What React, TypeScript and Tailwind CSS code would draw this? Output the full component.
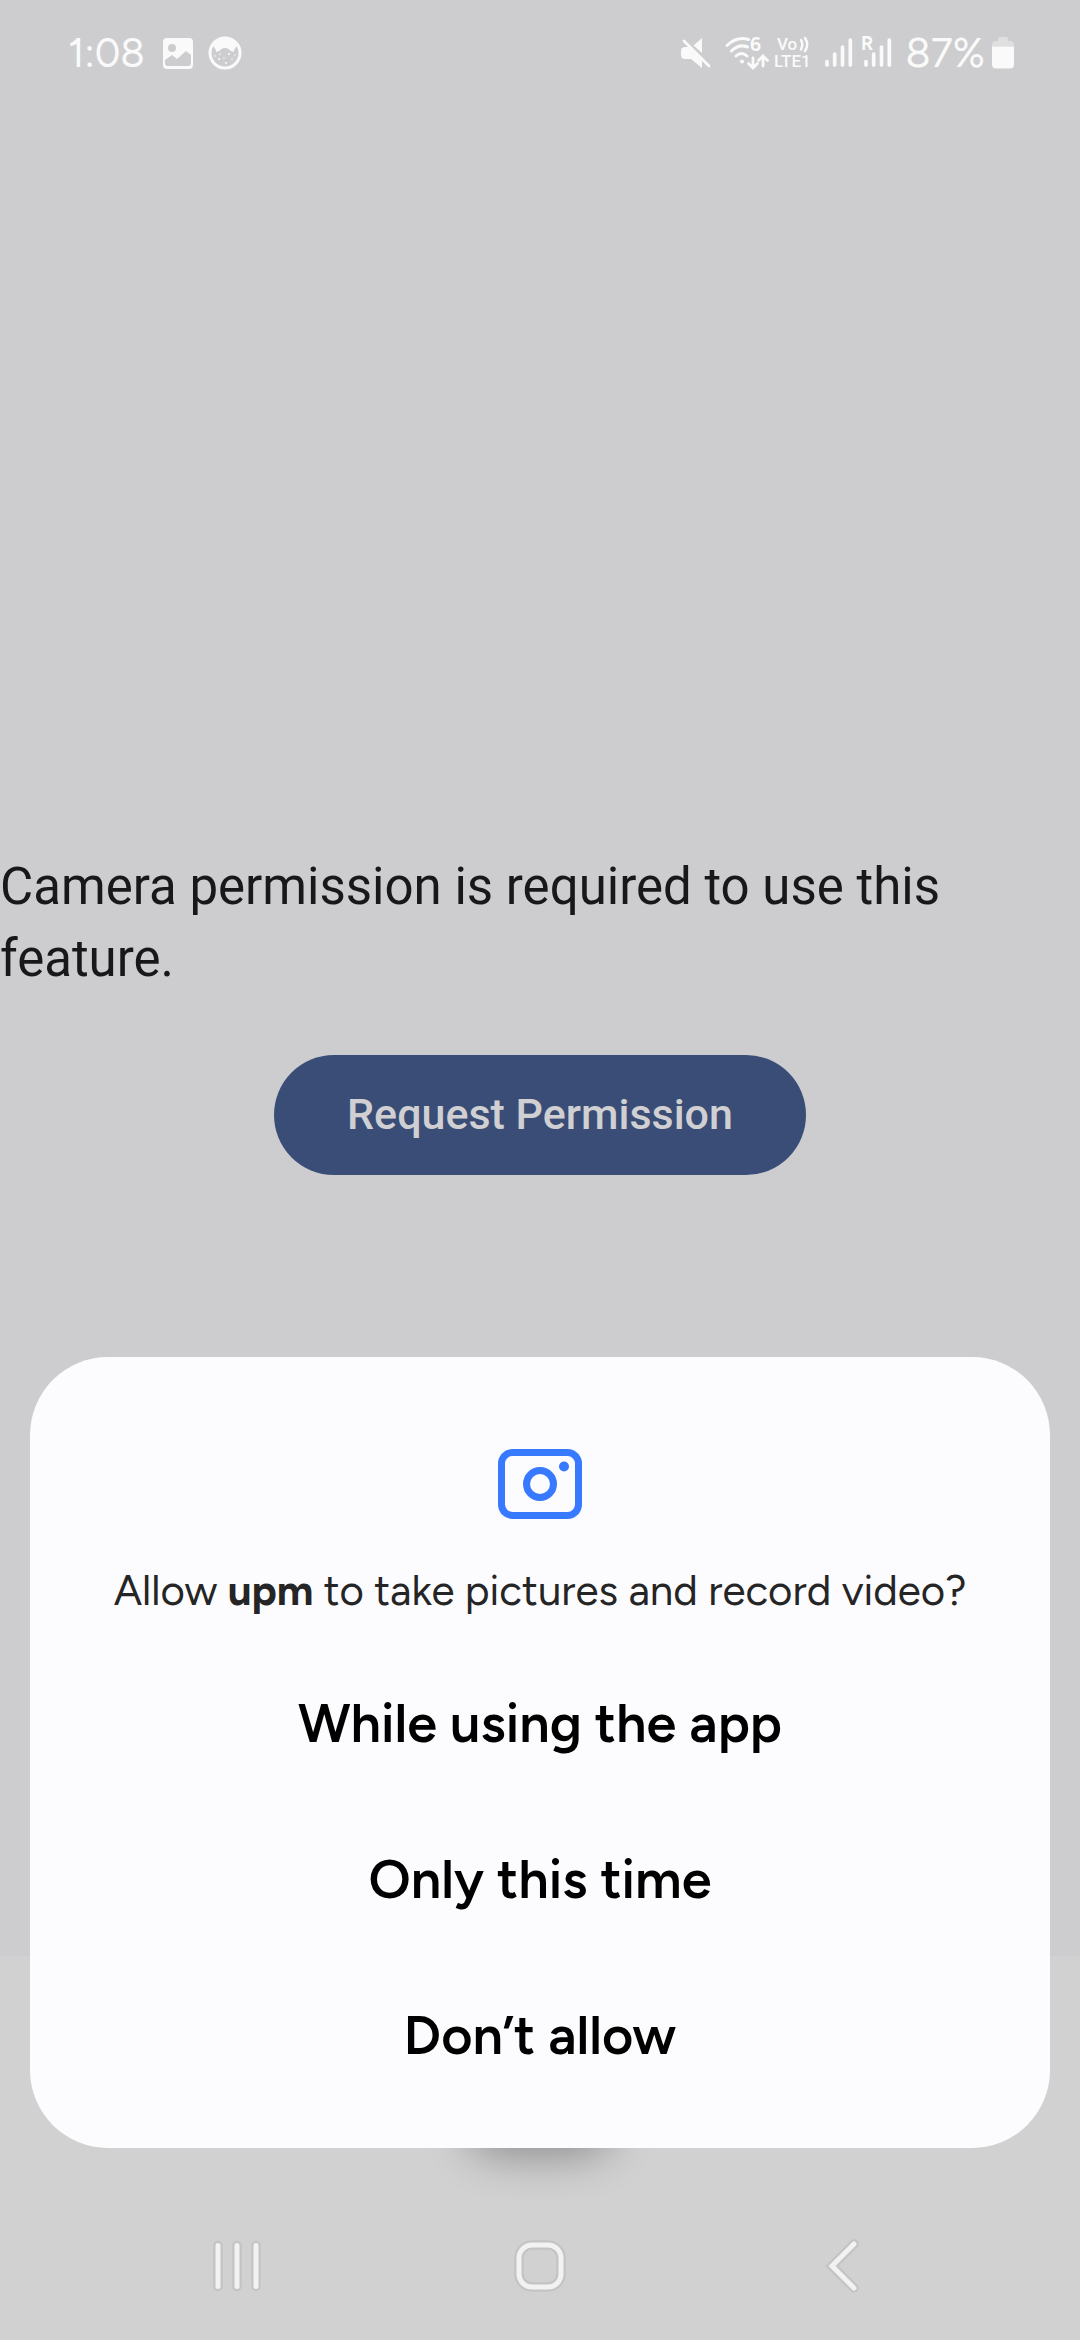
import React from "react";

function MuteIcon() {
  return (
    <svg className="h-[32px] w-[30px]" viewBox="0 0 30 32" fill="currentColor" aria-label="Muted">
      <path d="M12.500 8.500L21 1V16Z" />
      <path d="M4 10H7.500L21 23.500V31L10 22H4Q0 22 0 18V14Q0 10 4 10Z" />
      <path d="M3 4L28 29" stroke="currentColor" strokeWidth="2.800" strokeLinecap="round" />
    </svg>
  );
}

function WifiIcon() {
  return (
    <svg className="ml-[14px] h-[40px] w-[44px]" viewBox="0 -4 44 40" aria-label="Wi-Fi 6">
      <g fill="none" stroke="currentColor" strokeWidth="3" strokeLinecap="round">
        <path d="M2 8.500Q12 -1 23.500 2.500" />
        <path d="M6.500 14Q14 6.500 22.500 10" />
        <path d="M11 19Q16.500 14 22 19" />
        <path d="M28 21V30M23.500 26.500L28 31L32.500 26.500" strokeWidth="2.800" />
        <path d="M38 29V20M33.500 23.500L38 19L42.500 23.500" strokeWidth="2.800" />
      </g>
      <circle cx="17" cy="24.500" r="2" fill="currentColor" />
      <text x="25" y="14" fill="currentColor" className="font-['Figtree','Inter',sans-serif] text-[19px] font-bold">
        6
      </text>
    </svg>
  );
}

function VolteIcon() {
  return (
    <svg className="ml-[5px] h-[44px] w-[40px]" viewBox="0 -6 40 44" aria-label="VoLTE 1">
      <g fill="currentColor" className="font-['Roboto',sans-serif] text-[17px] font-medium">
        <text x="3" y="13">
          Vo
        </text>
        <text x="0" y="30">
          LTE1
        </text>
      </g>
      <g fill="none" stroke="currentColor" strokeWidth="2.500" strokeLinecap="round">
        <path d="M27 3Q29.500 7.500 27 12.500" />
        <path d="M31 1Q35.500 7.500 31 14" />
      </g>
    </svg>
  );
}

function SignalIcon({ roaming = false }: { roaming?: boolean }) {
  return (
    <svg className="ml-[8px] h-[40px] w-[31px]" viewBox="-1 -4 31 40" aria-label="Signal">
      <g stroke="currentColor" strokeWidth="3.700" strokeLinecap="round">
        <path d="M4 24.500V28" />
        <path d="M11.700 17V28" />
        <path d="M19.500 10V28" />
        <path d="M27.300 3V28" />
      </g>
      {roaming && (
        <text x="-1" y="13" fill="currentColor" className="font-['Figtree','Inter',sans-serif] text-[19px] font-bold">
          R
        </text>
      )}
    </svg>
  );
}

function BatteryIcon() {
  return (
    <svg className="h-[32px] w-[22px]" viewBox="0 0 22 32" fill="currentColor" aria-label="Battery">
      <path opacity=".4" d="M6 2Q6 0 8 0H14Q16 0 16 2V4H18Q22 4 22 8V9.500H0V8Q0 4 4 4H6Z" />
      <path d="M0 9.500H22V27.500Q22 31.500 18 31.500H4Q0 31.500 0 27.500Z" />
    </svg>
  );
}

function StatusBar() {
  return (
    <header className="flex h-[106px] items-center justify-between pl-[68px] pr-[66px] font-['Figtree','Inter',sans-serif] text-[#fafafa]">
      <div className="flex items-center">
        <span className="w-[94px] text-[40px] leading-[48px]">1:08</span>
        <svg className="mr-[14px] h-[34px] w-[32px]" viewBox="0 0 32 34" aria-label="Picture saved">
          <path
            fill="currentColor"
            fillRule="evenodd"
            d="M5 2h22a4 4 0 0 1 4 4v23a4 4 0 0 1-4 4H5a4 4 0 0 1-4-4V6a4 4 0 0 1 4-4ZM10 8a4 4 0 1 0 0 8a4 4 0 0 0 0-8ZM3 24l7-5l5 4l9-8l5 4v8a3 3 0 0 1-3 3H6a3 3 0 0 1-3-3Z"
          />
        </svg>
        <svg className="h-[34px] w-[34px]" viewBox="0 0 34 34" aria-label="App notification">
          <circle cx="17" cy="17" r="15" fill="none" stroke="currentColor" strokeWidth="3" />
          <path
            fill="currentColor"
            d="M7 6Q17 -2 27 6L29 10Q26 13 25.500 16L22 14.500Q21 12 17 12Q13 12 12 14.500L8.500 16Q8 13 5 10Z"
          />
          <g fill="currentColor">
            <circle cx="7" cy="20" r=".8" />
            <circle cx="12" cy="18" r=".8" />
            <circle cx="21" cy="18" r="1" />
            <circle cx="27" cy="19" r=".8" />
            <circle cx="11" cy="23" r="1" />
            <circle cx="16" cy="22" r=".8" />
            <circle cx="24" cy="23" r=".8" />
            <circle cx="18" cy="27" r="1" />
          </g>
        </svg>
      </div>
      <div className="flex items-center">
        <MuteIcon />
        <WifiIcon />
        <VolteIcon />
        <SignalIcon />
        <SignalIcon roaming />
        <span className="w-[100px] pr-[7px] text-right text-[41px] leading-[48px]">87%</span>
        <BatteryIcon />
      </div>
    </header>
  );
}

const choices = ["While using the app", "Only this time", "Don’t allow"];

function PermissionDialog() {
  return (
    <section
      role="dialog"
      aria-labelledby="permission-question"
      className="absolute inset-x-[30px] bottom-[192px] flex flex-col items-center rounded-[78px] bg-[#fcfcff] pt-[92px] pb-[35px] font-['Figtree','Inter',sans-serif]"
    >
      <svg className="h-[70px] w-[84px]" viewBox="0 0 84 70" aria-hidden="true">
        <rect x="3.500" y="3.500" width="77" height="63" rx="11" fill="none" stroke="#387aff" strokeWidth="7" />
        <circle cx="42" cy="35" r="13.500" fill="none" stroke="#387aff" strokeWidth="7" />
        <circle cx="66" cy="17.500" r="5" fill="#387aff" />
      </svg>
      <h1 id="permission-question" className="mt-[45px] text-[42px] leading-[54px] text-[#252525]">
        Allow <b>upm</b> to take pictures and record video?
      </h1>
      <div className="mt-[27px] flex w-full flex-col">
        {choices.map((choice) => (
          <button key={choice} type="button" className="h-[156px] text-[54px] font-semibold text-black">
            {choice}
          </button>
        ))}
      </div>
    </section>
  );
}

function NavBar() {
  return (
    <nav className="flex h-[144px] items-center justify-between px-[177px] pb-[4px]">
      <button type="button" aria-label="Recent apps" className="flex w-[120px] justify-center">
        <svg className="h-[56px] w-[56px]" viewBox="0 0 56 56" fill="none" strokeLinecap="round">
          <path d="M9 7.500V48.500M28 7.500V48.500M47 7.500V48.500" stroke="#c4c4c4" strokeWidth="9.500" />
          <path d="M9 7.500V48.500M28 7.500V48.500M47 7.500V48.500" stroke="#f2f2f2" strokeWidth="5" />
        </svg>
      </button>
      <button type="button" aria-label="Home" className="flex w-[120px] justify-center">
        <svg className="h-[56px] w-[56px]" viewBox="0 0 56 56" fill="none">
          <rect x="7" y="7" width="42" height="42" rx="13" stroke="#c4c4c4" strokeWidth="9.500" />
          <rect x="7" y="7" width="42" height="42" rx="13" stroke="#f2f2f2" strokeWidth="5" />
        </svg>
      </button>
      <button type="button" aria-label="Back" className="flex w-[120px] justify-center">
        <svg className="h-[56px] w-[56px]" viewBox="0 0 56 56" fill="none" strokeLinecap="round">
          <path d="M39 6L17 28L39 50" stroke="#c4c4c4" strokeWidth="9.500" />
          <path d="M39 6L17 28L39 50" stroke="#f2f2f2" strokeWidth="5" />
        </svg>
      </button>
    </nav>
  );
}

export default function App() {
  return (
    <div className="relative flex min-h-screen flex-col bg-[#cdcdcf]">
      <StatusBar />
      <main className="flex flex-1 flex-col items-center justify-center pb-[37px] font-['Roboto',sans-serif]">
        <p className="w-full pr-[120px] text-[51px] leading-[72px] text-[#18181a]">
          Camera permission is required to use this feature.
        </p>
        <button
          type="button"
          className="mt-[60px] h-[120px] rounded-full bg-[#3a4d77] px-[73px] text-[43px] font-medium text-[#d0d0d2]"
        >
          Request Permission
        </button>
      </main>
      <footer className="flex flex-col bg-[#d1d1d1]">
        <div className="flex h-[240px] justify-center pt-[44px]">
          <button
            type="button"
            aria-label="Capture"
            className="size-[144px] rounded-[32px] bg-[#d1d1d1] shadow-[0_12px_44px_rgba(0,0,0,0.32)]"
          />
        </div>
        <NavBar />
      </footer>
      <PermissionDialog />
    </div>
  );
}
